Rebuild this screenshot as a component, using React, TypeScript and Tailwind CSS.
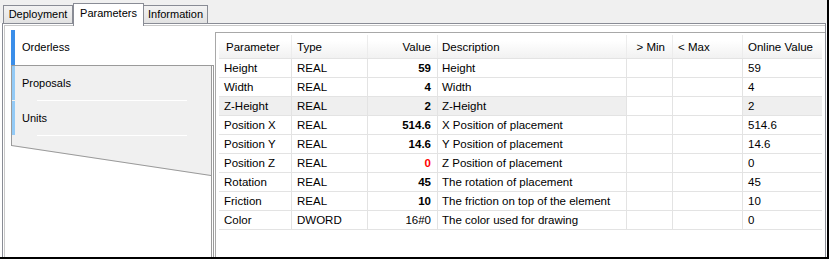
import React from 'react';

type Row = {
    name: string;
    type: string;
    value: string;
    desc: string;
    online: string;
    shaded?: boolean;
    red?: boolean;
    plain?: boolean;
};

const rows: Row[] = [
    { name: 'Height', type: 'REAL', value: '59', desc: 'Height', online: '59' },
    { name: 'Width', type: 'REAL', value: '4', desc: 'Width', online: '4' },
    { name: 'Z-Height', type: 'REAL', value: '2', desc: 'Z-Height', online: '2', shaded: true },
    { name: 'Position X', type: 'REAL', value: '514.6', desc: 'X Position of placement', online: '514.6' },
    { name: 'Position Y', type: 'REAL', value: '14.6', desc: 'Y Position of placement', online: '14.6' },
    { name: 'Position Z', type: 'REAL', value: '0', desc: 'Z Position of placement', online: '0', red: true },
    { name: 'Rotation', type: 'REAL', value: '45', desc: 'The rotation of placement', online: '45' },
    { name: 'Friction', type: 'REAL', value: '10', desc: 'The friction on top of the element', online: '10' },
    { name: 'Color', type: 'DWORD', value: '16#0', desc: 'The color used for drawing', online: '0', plain: true },
];

function NavItem({ label }: { label: string }) {
    return (
        <div className="flex flex-col">
            <div className="flex h-[34px]">
                <div className="w-[3px] bg-[#93caf6]" />
                <span className="self-center pl-[7px] text-[11px] leading-[13px]">{label}</span>
            </div>
            <div className="h-px">
                <div className="ml-[25px] h-px w-[150px] bg-white" />
            </div>
        </div>
    );
}

export default function App() {
    return (
        <div className="flex h-[259px] w-[829px] flex-col overflow-hidden border-r-2 border-b-2 border-black bg-white font-['Liberation_Sans',Arial,sans-serif] text-black">
            {/* tab strip */}
            <div className="relative z-10 flex h-[23px] shrink-0 items-end bg-[#f0f0f0] pl-[3px] text-[11px] leading-[13px]">
                <div className="flex h-[18px] w-[70px] items-center justify-center border-x border-t border-[#898c95] bg-linear-to-b from-[#f3f3f3] to-[#e2e2e2]">
                    Deployment
                </div>
                <div className="relative mb-[-3px] flex h-[23px] w-[71px] items-start justify-center border-x border-t border-[#898c95] bg-white pt-[3px]">
                    Parameters
                </div>
                <div className="flex h-[18px] w-[64px] items-center justify-center border-t border-r border-[#898c95] bg-linear-to-b from-[#f3f3f3] to-[#e2e2e2]">
                    Information
                </div>
            </div>

            {/* frame */}
            <div className="mr-px ml-[2px] flex min-h-0 flex-1 border-x border-t border-[#898c95]">
                <div className="mt-px ml-px flex min-h-0 flex-1 border-t border-l border-[#c9c9c9] pt-[4px] pl-[6px]">
                    {/* vertical tabs */}
                    <div className="flex w-[203px] shrink-0 flex-col">
                        <div className="flex h-[35px] bg-white">
                            <div className="w-[4px] bg-[#3a8ee9]" />
                            <span className="self-center pl-[7px] text-[11px] leading-[13px]">Orderless</span>
                        </div>
                        <div className="flex flex-1 border-t border-r border-[#9a9a9a]">
                            <div className="flex w-[201px] flex-col border-r border-[#9a9a9a]">
                                <div className="border-l border-[#9a9a9a] bg-[#f0f0f0]">
                                    <NavItem label="Proposals" />
                                    <NavItem label="Units" />
                                </div>
                                <svg width="200" height="41" viewBox="0 0 200 41" className="block">
                                    <polygon points="0,0 200,0 200,40 0,10" fill="#f0f0f0" />
                                    <line x1="0.5" y1="0" x2="0.5" y2="10" stroke="#9a9a9a" />
                                    <line x1="0.5" y1="9.5" x2="200" y2="39.5" stroke="#9a9a9a" />
                                </svg>
                            </div>
                        </div>
                    </div>

                    {/* parameter table */}
                    <div className="mt-[2px] ml-px min-w-0 flex-1 border-t border-l border-[#a8a8a8] pt-[2px] pl-[3px] text-[11.5px] leading-[14px]">
                        <div className="mr-[3px] flex flex-col">
                            <div className="flex h-[24px] border-b border-[#e3e3e3] bg-linear-to-b from-white from-25% to-[#f1f1f1]">
                                <div className="flex w-[73px] items-center border-r border-[#ececec] pl-[7px]">Parameter</div>
                                <div className="flex w-[76px] items-center border-r border-[#ececec] pl-[5px]">Type</div>
                                <div className="flex w-[70px] items-center justify-end border-r border-[#ececec] pr-[6px]">Value</div>
                                <div className="flex w-[189px] items-center border-r border-[#ececec] pl-[4px]">Description</div>
                                <div className="flex w-[46px] items-center justify-end border-r border-[#ececec] pr-[7px]">&gt; Min</div>
                                <div className="flex w-[70px] items-center border-r border-[#ececec] pl-[5px]">&lt; Max</div>
                                <div className="flex flex-1 items-center pl-[5px]">Online Value</div>
                            </div>
                            {rows.map((r) => (
                                <div key={r.name} className="flex h-[19px] border-b border-[#e3e3e3]">
                                    <div className={`flex w-[73px] items-center border-r border-[#e3e3e3] pl-[5px] ${r.shaded ? 'bg-[#efefef]' : ''}`}>
                                        {r.name}
                                    </div>
                                    <div className={`flex w-[76px] items-center border-r border-[#e3e3e3] pl-[5px] ${r.shaded ? 'bg-[#efefef]' : ''}`}>
                                        {r.type}
                                    </div>
                                    <div
                                        className={`flex w-[70px] items-center justify-end border-r border-[#e3e3e3] pr-[6px] ${r.shaded ? 'bg-[#efefef]' : ''} ${r.plain ? '' : 'font-bold'} ${r.red ? 'text-[#ff0000]' : ''}`}
                                    >
                                        {r.value}
                                    </div>
                                    <div className={`flex w-[189px] items-center border-r border-[#e3e3e3] pl-[4px] ${r.shaded ? 'bg-[#efefef]' : ''}`}>
                                        {r.desc}
                                    </div>
                                    <div className="w-[46px] border-r border-[#e3e3e3]" />
                                    <div className="w-[70px] border-r border-[#e3e3e3]" />
                                    <div className={`flex flex-1 items-center pl-[5px] ${r.shaded ? 'bg-[#efefef]' : ''}`}>{r.online}</div>
                                </div>
                            ))}
                        </div>
                    </div>
                </div>
            </div>
        </div>
    );
}
